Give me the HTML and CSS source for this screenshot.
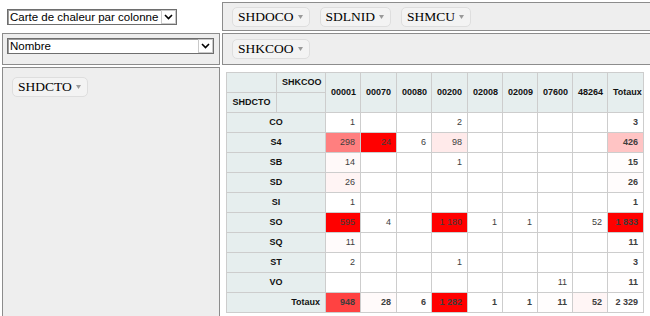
FILE: index.html
```html
<!DOCTYPE html>
<html lang="fr">
<head>
    <meta charset="UTF-8">
    <title>Tableau croisé</title>
    <link rel="stylesheet" href="styles.css">
</head>
<body>
    <div class="pvt-ui">
        <!-- choix du rendu -->
        <div class="renderer-cell">
            <div class="sel sel-renderer">
                <span class="sel-text">Carte de chaleur par colonne</span>
                <span class="sel-arrow"><svg width="9" height="6" viewBox="0 0 9 6"><polyline points="1,1 4.5,4.5 8,1" fill="none" stroke="#000" stroke-width="1.6"/></svg></span>
            </div>
        </div>
        <div class="axis unused">
            <span class="attr">SHDOCO<svg class="tri" width="5" height="4" viewBox="0 0 5 4"><polygon points="0,0 5,0 2.5,4"/></svg></span>
            <span class="attr">SDLNID<svg class="tri" width="5" height="4" viewBox="0 0 5 4"><polygon points="0,0 5,0 2.5,4"/></svg></span>
            <span class="attr">SHMCU<svg class="tri" width="5" height="4" viewBox="0 0 5 4"><polygon points="0,0 5,0 2.5,4"/></svg></span>
        </div>

        <!-- agregateur -->
        <div class="axis vals">
            <div class="sel sel-agg">
                <span class="sel-text">Nombre</span>
                <span class="sel-arrow"><svg width="9" height="6" viewBox="0 0 9 6"><polyline points="1,1 4.5,4.5 8,1" fill="none" stroke="#000" stroke-width="1.6"/></svg></span>
            </div>
        </div>
        <div class="axis cols">
            <span class="attr">SHKCOO<svg class="tri" width="5" height="4" viewBox="0 0 5 4"><polygon points="0,0 5,0 2.5,4"/></svg></span>
        </div>

        <div class="axis rows">
            <span class="attr">SHDCTO<svg class="tri" width="5" height="4" viewBox="0 0 5 4"><polygon points="0,0 5,0 2.5,4"/></svg></span>
        </div>
        <div class="renderer-area">
            <table class="pvt-table">
                <colgroup>
                    <col class="c-lab1"><col class="c-lab2">
                    <col class="c35"><col class="c36"><col class="c35"><col class="c36"><col class="c35">
                    <col class="c35"><col class="c35"><col class="c35"><col class="c36">
                </colgroup>
                <thead>
                    <tr>
                        <th></th>
                        <th>SHKCOO</th>
                        <th rowspan="2">00001</th>
                        <th rowspan="2">00070</th>
                        <th rowspan="2">00080</th>
                        <th rowspan="2">00200</th>
                        <th rowspan="2">02008</th>
                        <th rowspan="2">02009</th>
                        <th rowspan="2">07600</th>
                        <th rowspan="2">48264</th>
                        <th rowspan="2">Totaux</th>
                    </tr>
                    <tr>
                        <th>SHDCTO</th>
                        <th></th>
                    </tr>
                </thead>
                <tbody>
                    <tr>
                        <th colspan="2">CO</th>
                        <td>1</td><td></td><td></td><td>2</td><td></td><td></td><td></td><td></td>
                        <td class="total">3</td>
                    </tr>
                    <tr>
                        <th colspan="2">S4</th>
                        <td style="background-color: rgb(255,127,127)">298</td>
                        <td style="background-color: rgb(255,0,0)">24</td>
                        <td>6</td>
                        <td style="background-color: rgb(255,234,234)">98</td>
                        <td></td><td></td><td></td><td></td>
                        <td class="total" style="background-color: rgb(255,196,196)">426</td>
                    </tr>
                    <tr>
                        <th colspan="2">SB</th>
                        <td style="background-color: rgb(255,249,249)">14</td>
                        <td></td><td></td><td>1</td><td></td><td></td><td></td><td></td>
                        <td class="total" style="background-color: rgb(255,253,253)">15</td>
                    </tr>
                    <tr>
                        <th colspan="2">SD</th>
                        <td style="background-color: rgb(255,244,244)">26</td>
                        <td></td><td></td><td></td><td></td><td></td><td></td><td></td>
                        <td class="total" style="background-color: rgb(255,252,252)">26</td>
                    </tr>
                    <tr>
                        <th colspan="2">SI</th>
                        <td>1</td>
                        <td></td><td></td><td></td><td></td><td></td><td></td><td></td>
                        <td class="total">1</td>
                    </tr>
                    <tr>
                        <th colspan="2">SO</th>
                        <td style="background-color: rgb(255,0,0)">595</td>
                        <td>4</td>
                        <td></td>
                        <td style="background-color: rgb(255,0,0)">1&nbsp;180</td>
                        <td>1</td><td>1</td><td></td><td>52</td>
                        <td class="total" style="background-color: rgb(255,0,0)">1&nbsp;833</td>
                    </tr>
                    <tr>
                        <th colspan="2">SQ</th>
                        <td style="background-color: rgb(255,251,251)">11</td>
                        <td></td><td></td><td></td><td></td><td></td><td></td><td></td>
                        <td class="total" style="background-color: rgb(255,254,254)">11</td>
                    </tr>
                    <tr>
                        <th colspan="2">ST</th>
                        <td>2</td>
                        <td></td><td></td><td>1</td><td></td><td></td><td></td><td></td>
                        <td class="total">3</td>
                    </tr>
                    <tr>
                        <th colspan="2">VO</th>
                        <td></td><td></td><td></td><td></td><td></td><td></td><td>11</td><td></td>
                        <td class="total" style="background-color: rgb(255,254,254)">11</td>
                    </tr>
                    <tr>
                        <th colspan="2" class="total-label">Totaux</th>
                        <td class="total" style="background-color: rgb(255,66,66)">948</td>
                        <td class="total" style="background-color: rgb(255,250,250)">28</td>
                        <td class="total" style="background-color: rgb(255,254,254)">6</td>
                        <td class="total" style="background-color: rgb(255,0,0)">1&nbsp;282</td>
                        <td class="total">1</td>
                        <td class="total">1</td>
                        <td class="total" style="background-color: rgb(255,253,253)">11</td>
                        <td class="total" style="background-color: rgb(255,245,245)">52</td>
                        <td class="total">2&nbsp;329</td>
                    </tr>
                </tbody>
            </table>
        </div>
    </div>
</body>
</html>
```

FILE: styles.css
```css
html, body{
    margin: 0;
    overflow: hidden;
}
body{
    font-family: "Liberation Serif", "Times New Roman", serif;
    color: #333;
    background: #fff;
}
.pvt-ui{
    display: grid;
    grid-template-columns: 218px 440px;
    grid-template-rows: 29px 32px 300px;
    gap: 2px;
    padding: 2px;
}
.axis{
    box-sizing: border-box;
    border: 1px solid #8c8c8c;
    background: #eee;
}
.unused, .cols{
    display: flex;
    align-items: flex-start;
    gap: 10px;
    padding: 4px 9px;
}
.cols{
    padding-top: 5px;
}
.rows{
    padding: 9px 9px;
}
.vals{
    padding: 4px 4px;
}
.renderer-cell{
    padding: 7px 0 0 5px;
}
.renderer-area{
    padding: 5px 0 0 4px;
}

/* listes deroulantes */
.sel{
    box-sizing: border-box;
    height: 16px;
    display: flex;
    align-items: center;
    background: #fff;
    border: 1px solid #6e6e6e;
    box-shadow: inset 1px 1px 0 #9c9c9c;
    font-family: "Liberation Sans", Arial, sans-serif;
    font-size: 11.5px;
    color: #000;
}
.sel-renderer{
    width: 170px;
}
.sel-agg{
    width: 207px;
}
.sel-text{
    flex: 1;
    padding-left: 2px;
    white-space: nowrap;
    overflow: hidden;
}
.sel-arrow{
    box-sizing: border-box;
    width: 15px;
    height: 14px;
    border: 1px solid #c9c9c9;
    display: flex;
    align-items: center;
    justify-content: center;
    background: #fff;
}

/* attributs */
.attr{
    display: inline-flex;
    align-items: center;
    height: 20px;
    box-sizing: border-box;
    padding: 0 6px 0 5px;
    background: #f3f3f3;
    border: 1px solid #dedede;
    border-radius: 5px;
    font-size: 13.5px;
    color: #000;
    white-space: nowrap;
}
.tri{
    margin-left: 4px;
    fill: #9a9a9a;
}

/* tableau */
.pvt-table{
    border-collapse: collapse;
    table-layout: fixed;
    width: 418px;
    font-family: "Liberation Sans", Arial, sans-serif;
    font-size: 9px;
}
.c-lab1{ width: 50px; }
.c-lab2{ width: 49px; }
.c35{ width: 35px; }
.c36{ width: 36px; }
.pvt-table th,
.pvt-table td{
    border: 1px solid #cdcdcd;
    padding: 4px 5px;
    line-height: 11px;
    white-space: nowrap;
    overflow: hidden;
}
.pvt-table th{
    background: #e6eeee;
    color: #111;
    font-weight: bold;
    text-align: center;
}
.pvt-table td{
    background-color: #fff;
    color: #3d3d3d;
    text-align: right;
}
.pvt-table .total{
    font-weight: bold;
}
.pvt-table .total-label{
    text-align: right;
}
```
